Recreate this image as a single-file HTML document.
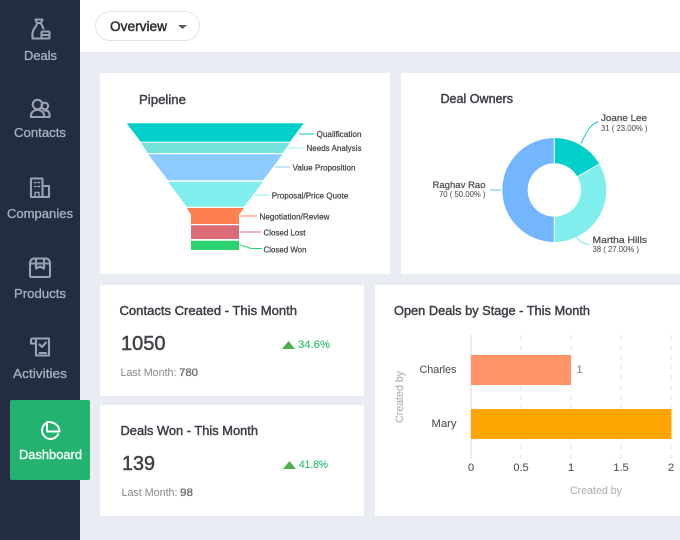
<!DOCTYPE html>
<html><head><meta charset="utf-8"><style>
html,body{margin:0;padding:0;width:680px;height:540px;overflow:hidden;background:#e9edf3}
svg{display:block}
text{font-family:"Liberation Sans",sans-serif}
.nav{font-size:12.5px;fill:#a9b0bd;stroke:#a9b0bd;stroke-width:.3}
.ico{fill:none;stroke:#9aa2b1;stroke-width:2.1;stroke-linejoin:round;stroke-linecap:round}
.title{font-size:12.5px;fill:#3e4148;stroke:#3e4148;stroke-width:.45}
.lab{font-size:8.5px;fill:#3f4247;stroke:#3f4247;stroke-width:.22}
.nm{font-size:9.5px;fill:#55585e;stroke:#55585e;stroke-width:.3}
.sub{font-size:8.5px;fill:#55585e;stroke:#55585e;stroke-width:.1}
.num{font-size:20px;fill:#404348;stroke:#404348;stroke-width:.5}
.pct{font-size:11px;fill:#27ba6e;stroke:#27ba6e;stroke-width:.12}
.lm{font-size:11px;fill:#85888d}
.ax{font-size:11px;fill:#54575c;stroke:#54575c;stroke-width:.12}
.cb{font-size:11px;fill:#aeb0b4;stroke:#aeb0b4;stroke-width:.1}
</style></head><body>
<svg width="680" height="540" viewBox="0 0 680 540" xmlns="http://www.w3.org/2000/svg">
<rect width="680" height="540" fill="#e9edf3"/>
<rect x="80" width="600" height="52" fill="#fff"/>
<rect x="0" width="80" height="540" fill="#222d42"/>

<!-- header -->
<rect x="95.5" y="11.5" width="104" height="29" rx="14.5" fill="#fff" stroke="#e2e4e8"/>
<text x="110" y="31" font-size="13.5" fill="#2b2d31" stroke="#2b2d31" stroke-width=".45" textLength="57" lengthAdjust="spacingAndGlyphs">Overview</text>
<path d="M178 25h9l-4.5 4z" fill="#5a5c60"/>

<!-- cards -->
<rect x="100" y="73" width="290" height="201" fill="#fff"/>
<rect x="401" y="73" width="279" height="201" fill="#fff"/>
<rect x="100" y="285" width="264" height="111" fill="#fff"/>
<rect x="100" y="405" width="264" height="111" fill="#fff"/>
<rect x="375" y="285" width="305" height="231" fill="#fff"/>

<!-- sidebar icons -->
<g class="ico">
<path d="M35.500 19.500h7l-1.500 3.500h-4zM37 23.500c-.5 3.500-4.500 5.500-4.500 10v5h8.500"/>
<path d="M41 23.500l2.500 5"/>
<rect x="41.500" y="31.500" width="8" height="7" rx="1"/><path d="M41.500 35h8"/>
<circle cx="37.500" cy="104.500" r="4.700"/><circle cx="44.800" cy="106" r="3.300"/>
<path d="M31 117c-.5-4 2-7 6.500-7s7 3 6.500 7zM44.500 110.500c3.500-.5 5.500 1.500 5 6.500h-5.500"/>
<path d="M31 197v-18.500h11.500v18.500zM42.500 186h6.500v11h-6.500M31 197h18"/>
<path d="M35 192.500h4v4.500h-4z" stroke-width="1.400"/>
<path d="M34.500 182.500h1.500m2 0h1.500M34.500 186.500h1.500m2 0h1.500" stroke-width="1.500"/>
<path d="M34 258.500h12c2 0 4 2 4 4.500v12.500c0 1-.7 1.500-1.500 1.500h-17c-.8 0-1.500-.5-1.500-1.500v-12.500c0-2.500 2-4.500 4-4.500zM30 263.500h20M36 259v9.500l4-2 4 2v-9.500"/>
<path d="M36 338.500h13v17h-13zM36 338.500h-3.500c-1 0-1.500 .8-1.500 1.500v3.500h5"/>
<path d="M39.500 344.500l2.500 2.500 4-4.500M39.500 353h6.500"/>
</g>

<text class="nav" x="24" y="60" textLength="33" lengthAdjust="spacingAndGlyphs">Deals</text>
<text class="nav" x="14" y="137" textLength="52" lengthAdjust="spacingAndGlyphs">Contacts</text>
<text class="nav" x="7" y="218" textLength="66" lengthAdjust="spacingAndGlyphs">Companies</text>
<text class="nav" x="14" y="298" textLength="52" lengthAdjust="spacingAndGlyphs">Products</text>
<text class="nav" x="13" y="378" textLength="54" lengthAdjust="spacingAndGlyphs">Activities</text>

<!-- dashboard -->
<rect x="10" y="400" width="80" height="80" rx="2" fill="#23b270"/>
<g fill="none" stroke="#fff" stroke-width="2">
<path d="M47.500 422.500a8.500 8.500 0 1 0 11 11"/>
<path d="M47 422v9.500h12.500c0-5.500-5-10-12.500-9.500z" stroke-linejoin="round"/>
</g>
<text x="19" y="459" font-size="12.500" fill="#eefaf4" stroke="#eefaf4" stroke-width=".4" textLength="63" lengthAdjust="spacingAndGlyphs">Dashboard</text>

<!-- pipeline -->
<text class="title" x="139" y="104" textLength="47" lengthAdjust="spacingAndGlyphs">Pipeline</text>
<path d="M126.700 123.300H303.700L290 141.700H140.700z" fill="#00d0c9"/>
<path d="M141 142.800H290L282.700 153H147.700z" fill="#72e2da"/>
<path d="M148 154.200H282.700L263 180.300H168z" fill="#8ccaff"/>
<path d="M168 181.700H263L244 206.700H186.700z" fill="#80eeec"/>
<path d="M186.700 208H244L239 214.700V224H191V214.700z" fill="#ff7f50"/>
<path d="M191 225.300H239V239H191z" fill="#dc6b78"/>
<path d="M191 240.700H239V250H191z" fill="#2dd36f"/>
<g fill="none" stroke-width="1">
<path d="M299 134H314" stroke="#00d0c9"/>
<path d="M288 148H304" stroke="#a5ece7"/>
<path d="M275 167H290" stroke="#8ccaff"/>
<path d="M255 195H269" stroke="#80eeec"/>
<path d="M240.500 216H257" stroke="#ff7f50"/>
<path d="M240.500 232H261" stroke="#dc6b78"/>
<path d="M240.500 245L251 248.500H262" stroke="#2dd36f"/>
</g>
<text class="lab" x="316.500" y="137" textLength="45" lengthAdjust="spacingAndGlyphs">Qualification</text>
<text class="lab" x="306.500" y="151" textLength="55" lengthAdjust="spacingAndGlyphs">Needs Analysis</text>
<text class="lab" x="292.500" y="170.500" textLength="63" lengthAdjust="spacingAndGlyphs">Value Proposition</text>
<text class="lab" x="271.700" y="198.500" textLength="76.500" lengthAdjust="spacingAndGlyphs">Proposal/Price Quote</text>
<text class="lab" x="259.500" y="219.500" textLength="70" lengthAdjust="spacingAndGlyphs">Negotiation/Review</text>
<text class="lab" x="263.500" y="235.500" textLength="42" lengthAdjust="spacingAndGlyphs">Closed Lost</text>
<text class="lab" x="263.500" y="252.500" textLength="43" lengthAdjust="spacingAndGlyphs">Closed Won</text>

<!-- donut -->
<text class="title" x="440.500" y="103" textLength="72.500" lengthAdjust="spacingAndGlyphs">Deal Owners</text>
<path d="M554.300 138A52 52 0 0 1 599.300 164L577.400 176.650A26.700 26.700 0 0 0 554.300 163.300z" fill="#00d0c9"/>
<path d="M599.300 164A52 52 0 0 1 554.300 242V216.700A26.700 26.700 0 0 0 577.400 176.650z" fill="#80eeec"/>
<path d="M554.300 242A52 52 0 0 1 554.300 138V163.300A26.700 26.700 0 0 0 554.300 216.700z" fill="#73b6ff"/>
<path d="M554.300 138V163.300M599.300 164L577.400 176.650M554.300 216.700V242" stroke="#fff" stroke-width="1" fill="none"/>
<g fill="none" stroke-width="1">
<path d="M581 143.500C586 133 590 124 598 122" stroke="#00d0c9"/>
<path d="M490 190H501" stroke="#73b6ff"/>
<path d="M576 237C581 243 585 244 590 244.500" stroke="#80eeec"/>
</g>
<text class="nm" x="601" y="121" textLength="46" lengthAdjust="spacingAndGlyphs">Joane Lee</text>
<text class="sub" x="601" y="131" textLength="46.500" lengthAdjust="spacingAndGlyphs">31 ( 23.00% )</text>
<text class="nm" x="432.500" y="188" textLength="53" lengthAdjust="spacingAndGlyphs">Raghav Rao</text>
<text class="sub" x="439" y="197" textLength="46.500" lengthAdjust="spacingAndGlyphs">70 ( 50.00% )</text>
<text class="nm" x="592.500" y="243" textLength="54.500" lengthAdjust="spacingAndGlyphs">Martha Hills</text>
<text class="sub" x="592.500" y="252" textLength="46.500" lengthAdjust="spacingAndGlyphs">38 ( 27.00% )</text>

<!-- contacts -->
<text class="title" x="119.500" y="315" textLength="177.500" lengthAdjust="spacingAndGlyphs">Contacts Created - This Month</text>
<text class="num" x="121" y="350" textLength="44.500" lengthAdjust="spacingAndGlyphs">1050</text>
<path d="M282 349L288.500 341L295 349z" fill="#4caf50"/>
<text class="pct" x="298" y="348" textLength="32" lengthAdjust="spacingAndGlyphs">34.6%</text>
<text class="lm" x="120.500" y="376" textLength="56" lengthAdjust="spacingAndGlyphs">Last Month:</text>
<text class="lm" x="179" y="376" style="fill:#6b6e73" textLength="19" lengthAdjust="spacingAndGlyphs" stroke="#6b6e73" stroke-width=".3">780</text>

<!-- deals won -->
<text class="title" x="120.500" y="435" textLength="137.500" lengthAdjust="spacingAndGlyphs">Deals Won - This Month</text>
<text class="num" x="122" y="470" textLength="33" lengthAdjust="spacingAndGlyphs">139</text>
<path d="M283 469L289.500 461L296 469z" fill="#4caf50"/>
<text class="pct" x="299" y="468" textLength="29" lengthAdjust="spacingAndGlyphs">41.8%</text>
<text class="lm" x="121.500" y="496" textLength="56" lengthAdjust="spacingAndGlyphs">Last Month:</text>
<text class="lm" x="180" y="496" style="fill:#6b6e73" stroke="#6b6e73" stroke-width=".3" textLength="13" lengthAdjust="spacingAndGlyphs">98</text>

<!-- bars -->
<text class="title" x="394" y="315" textLength="196" lengthAdjust="spacingAndGlyphs">Open Deals by Stage - This Month</text>
<path d="M521 335V459M571 335V459M621 335V459M671 335V459" stroke="#dfe0e4" stroke-width="1" stroke-dasharray="5 5"/>
<path d="M471 335V459" stroke="#d5d8e8" stroke-width="1"/>
<rect x="471" y="355" width="100" height="30" fill="#ff9468"/>
<rect x="471" y="409" width="200.500" height="30" fill="#ffa500"/>
<text class="ax" x="419.500" y="373" textLength="37" lengthAdjust="spacingAndGlyphs">Charles</text>
<text class="ax" x="431.500" y="427" textLength="25" lengthAdjust="spacingAndGlyphs">Mary</text>
<text class="ax" x="576.500" y="373" style="fill:#85888d;stroke:#85888d">1</text>
<g class="ax" text-anchor="middle">
<text x="471" y="471">0</text><text x="521" y="471">0.5</text><text x="571" y="471">1</text><text x="621" y="471">1.5</text><text x="671" y="471">2</text>
</g>
<text class="cb" x="570" y="494" textLength="52" lengthAdjust="spacingAndGlyphs">Created by</text>
<text class="cb" transform="translate(403 423) rotate(-90)" x="0" y="0" textLength="52" lengthAdjust="spacingAndGlyphs">Created by</text>
</svg>
</body></html>
